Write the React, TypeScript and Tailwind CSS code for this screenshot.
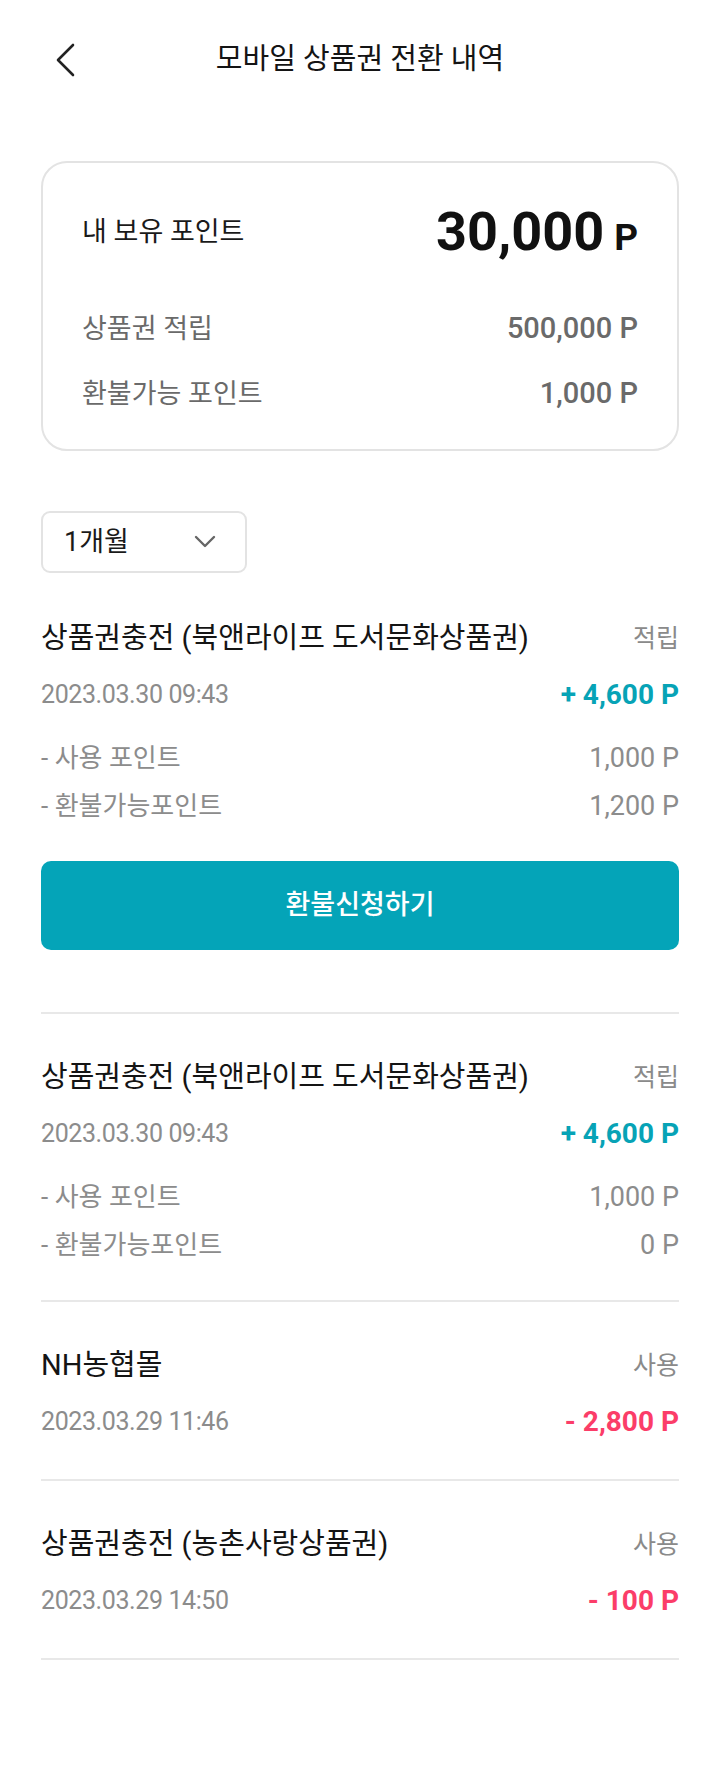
import { ReactNode } from "react";

interface HistoryItem {
    title: string;
    type: string;
    date: string;
    amount: string;
    plus: boolean;
    usedPoint?: string;
    refundPoint?: string;
    refundable?: boolean;
}

const items: HistoryItem[] = [
    {
        title: "상품권충전 (북앤라이프 도서문화상품권)",
        type: "적립",
        date: "2023.03.30 09:43",
        amount: "+ 4,600 P",
        plus: true,
        usedPoint: "1,000 P",
        refundPoint: "1,200 P",
        refundable: true
    },
    {
        title: "상품권충전 (북앤라이프 도서문화상품권)",
        type: "적립",
        date: "2023.03.30 09:43",
        amount: "+ 4,600 P",
        plus: true,
        usedPoint: "1,000 P",
        refundPoint: "0 P"
    },
    {
        title: "NH농협몰",
        type: "사용",
        date: "2023.03.29 11:46",
        amount: "- 2,800 P",
        plus: false
    },
    {
        title: "상품권충전 (농촌사랑상품권)",
        type: "사용",
        date: "2023.03.29 14:50",
        amount: "- 100 P",
        plus: false
    }
];

function Row({ left, right, className }: { left: ReactNode; right: ReactNode; className?: string }) {
    return (
        <div className={`flex items-center justify-between ${className ?? ""}`}>
            {left}
            {right}
        </div>
    );
}

function HistoryRow({ item, first }: { item: HistoryItem; first?: boolean }) {
    return (
        <div
            className={`border-b-2 border-[#e8e8e8] ${first ? "pt-[42px]" : "pt-[40px]"} ${
                item.refundable ? "pb-[62px]" : "pb-[33px]"
            }`}
        >
            <Row
                className="h-[48px]"
                left={<span className="text-[29px] text-[#141414]">{item.title}</span>}
                right={<span className="text-[25px] text-[#8a8a8a]">{item.type}</span>}
            />
            <Row
                className="mt-[8px] h-[48px]"
                left={<span className="text-[25px] tracking-[-0.4px] text-[#8c8c8c]">{item.date}</span>}
                right={
                    <span
                        className={`text-[28px] font-bold ${item.plus ? "text-[#07a3b6]" : "text-[#fb3d68]"}`}
                    >
                        {item.amount}
                    </span>
                }
            />
            {item.usedPoint && (
                <div className="mt-[17px] flex flex-col gap-[4px]">
                    <Row
                        className="h-[44px]"
                        left={<span className="text-[26px] text-[#8c8c8c]">- 사용 포인트</span>}
                        right={<span className="text-[27px] text-[#8c8c8c]">{item.usedPoint}</span>}
                    />
                    <Row
                        className="h-[44px]"
                        left={<span className="text-[26px] text-[#8c8c8c]">- 환불가능포인트</span>}
                        right={<span className="text-[27px] text-[#8c8c8c]">{item.refundPoint}</span>}
                    />
                </div>
            )}
            {item.refundable && (
                <button
                    type="button"
                    className="mt-[33px] flex h-[89px] w-full items-center justify-center rounded-[10px] bg-[#04a4b8] text-[27px] font-medium text-white"
                >
                    환불신청하기
                </button>
            )}
        </div>
    );
}

function App() {
    return (
        <div className="min-h-[1779px] bg-white font-[Roboto,'Noto_Sans_CJK_KR',sans-serif]">
            <header className="grid h-[120px] grid-cols-[1fr_auto_1fr] items-center">
                <div className="pl-[54px]">
                    <svg width="22" height="34" viewBox="0 0 22 34" fill="none">
                        <path d="M19 2 L4 17 L19 32" stroke="#222" strokeWidth="2.6" strokeLinecap="round" strokeLinejoin="round" />
                    </svg>
                </div>
                <h1 className="text-[29px] font-normal text-[#141414]">모바일 상품권 전환 내역</h1>
                <div />
            </header>

            <main className="px-[41px]">
                <section className="mt-[41px] rounded-[26px] border-2 border-[#e3e3e3] px-[39px] pb-[31px] pt-[40px]">
                    <Row
                        className="h-[58px]"
                        left={<span className="text-[27px] text-[#1a1a1a]">내 보유 포인트</span>}
                        right={
                            <span className="flex items-baseline font-bold text-[#111]">
                                <span className="text-[54px] leading-none">30,000</span>
                                <span className="ml-[10px] text-[37px] leading-none">P</span>
                            </span>
                        }
                    />
                    <Row
                        className="mt-[44px] h-[48px]"
                        left={<span className="text-[27px] text-[#6a6a6a]">상품권 적립</span>}
                        right={<span className="text-[29px] font-medium text-[#6a6a6a]">500,000 P</span>}
                    />
                    <Row
                        className="mt-[17px] h-[48px]"
                        left={<span className="text-[27px] text-[#6a6a6a]">환불가능 포인트</span>}
                        right={<span className="text-[29px] font-medium text-[#6a6a6a]">1,000 P</span>}
                    />
                </section>

                <button
                    type="button"
                    className="mt-[60px] flex h-[62px] w-[206px] items-center justify-between rounded-[9px] border-2 border-[#e3e3e3] pl-[21px] pr-[29px]"
                >
                    <span className="text-[27px] text-[#1a1a1a]">1개월</span>
                    <svg width="22" height="14" viewBox="0 0 22 14" fill="none">
                        <path d="M2 2 L11 11 L20 2" stroke="#666" strokeWidth="2.4" strokeLinecap="round" strokeLinejoin="round" />
                    </svg>
                </button>

                <div>
                    {items.map((item, i) => (
                        <HistoryRow key={i} item={item} first={i === 0} />
                    ))}
                </div>
            </main>
        </div>
    );
}

export default App;
